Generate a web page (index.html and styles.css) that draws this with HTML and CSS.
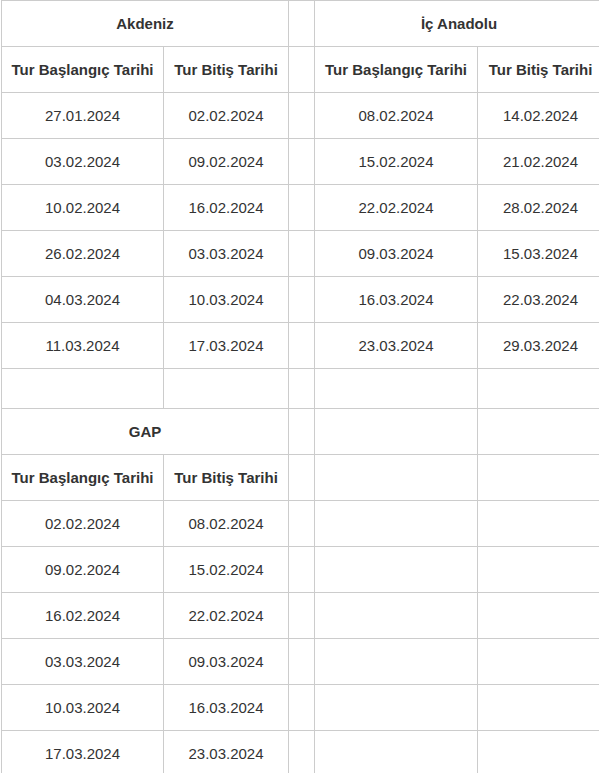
FILE: index.html
```
<!DOCTYPE html>
<html lang="tr">
<head>
<meta charset="utf-8">
<title>Tur Tarihleri</title>
<link rel="stylesheet" href="styles.css">
</head>
<body>
<div class="wrap">
<table class="tours">
<colgroup>
<col class="c1"><col class="c2"><col class="c3"><col class="c4"><col class="c5">
</colgroup>
<tbody>
<tr><th colspan="2">Akdeniz</th><td></td><th colspan="2">İç Anadolu</th></tr>
<tr><th>Tur Başlangıç Tarihi</th><th>Tur Bitiş Tarihi</th><td></td><th>Tur Başlangıç Tarihi</th><th>Tur Bitiş Tarihi</th></tr>
<tr><td>27.01.2024</td><td>02.02.2024</td><td></td><td>08.02.2024</td><td>14.02.2024</td></tr>
<tr><td>03.02.2024</td><td>09.02.2024</td><td></td><td>15.02.2024</td><td>21.02.2024</td></tr>
<tr><td>10.02.2024</td><td>16.02.2024</td><td></td><td>22.02.2024</td><td>28.02.2024</td></tr>
<tr><td>26.02.2024</td><td>03.03.2024</td><td></td><td>09.03.2024</td><td>15.03.2024</td></tr>
<tr><td>04.03.2024</td><td>10.03.2024</td><td></td><td>16.03.2024</td><td>22.03.2024</td></tr>
<tr><td>11.03.2024</td><td>17.03.2024</td><td></td><td>23.03.2024</td><td>29.03.2024</td></tr>
<tr class="gap-row"><td></td><td></td><td></td><td></td><td></td></tr>
<tr><th colspan="2">GAP</th><td></td><td></td><td></td></tr>
<tr><th>Tur Başlangıç Tarihi</th><th>Tur Bitiş Tarihi</th><td></td><td></td><td></td></tr>
<tr><td>02.02.2024</td><td>08.02.2024</td><td></td><td></td><td></td></tr>
<tr><td>09.02.2024</td><td>15.02.2024</td><td></td><td></td><td></td></tr>
<tr><td>16.02.2024</td><td>22.02.2024</td><td></td><td></td><td></td></tr>
<tr><td>03.03.2024</td><td>09.03.2024</td><td></td><td></td><td></td></tr>
<tr><td>10.03.2024</td><td>16.03.2024</td><td></td><td></td><td></td></tr>
<tr><td>17.03.2024</td><td>23.03.2024</td><td></td><td></td><td></td></tr>
</tbody>
</table>
</div>
</body>
</html>
```
FILE: styles.css
```
html, body {
  margin: 0;
  padding: 0;
  overflow: hidden;
  background: #fff;
}
.wrap {
  padding: 0 0 0 1px;
}
.tours {
  border-collapse: collapse;
  table-layout: fixed;
  width: 602px;
  font-family: "Liberation Sans", Arial, sans-serif;
  font-size: 15px;
  color: #333;
}
.c1 { width: 162px; }
.c2 { width: 125px; }
.c3 { width: 26px; }
.c4 { width: 163px; }
.c5 { width: 126px; }
.tours th,
.tours td {
  border: 1px solid #ccc;
  height: 46px;
  padding: 0 4px;
  text-align: center;
  vertical-align: middle;
  white-space: nowrap;
  box-sizing: border-box;
}
.tours th {
  font-weight: bold;
}
.tours .gap-row td {
  height: 40px;
}
```
